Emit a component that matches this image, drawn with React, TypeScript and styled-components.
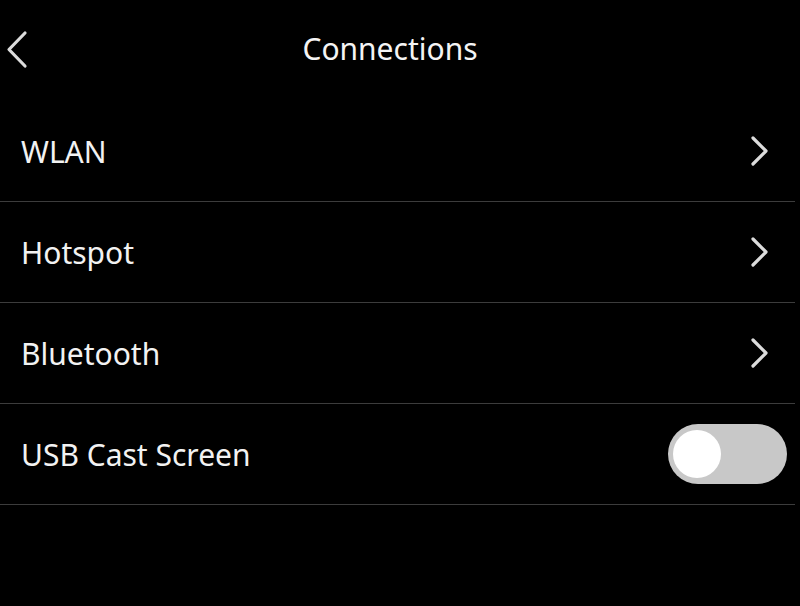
import React, { useState } from "react";
import styled, { createGlobalStyle } from "styled-components";

const GlobalStyle = createGlobalStyle`
  html, body {
    margin: 0;
    padding: 0;
    background: #000;
  }
  body {
    font-family: "Noto Sans", "Open Sans", sans-serif;
    color: #f2f2f2;
  }
`;

type Item = {
  label: string;
  kind: "link" | "toggle";
};

const items: Item[] = [
  { label: "WLAN", kind: "link" },
  { label: "Hotspot", kind: "link" },
  { label: "Bluetooth", kind: "link" },
  { label: "USB Cast Screen", kind: "toggle" },
];

function ChevronLeft() {
  return (
    <svg width="24" height="40" viewBox="0 0 24 40" fill="none">
      <path d="M20 4 L4 20.5 L20 37" stroke="#dcdcdc" strokeWidth="3.2" strokeLinecap="round" strokeLinejoin="round" />
    </svg>
  );
}

function ChevronRight() {
  return (
    <svg width="20" height="32" viewBox="0 0 20 32" fill="none">
      <path d="M3 3 L16 16 L3 29" stroke="#dcdcdc" strokeWidth="3.2" strokeLinecap="round" strokeLinejoin="round" />
    </svg>
  );
}

function Toggle({ on, onClick }: { on: boolean; onClick: () => void }) {
  return (
    <Track $on={on} onClick={onClick} role="switch" aria-checked={on}>
      <Knob $on={on} />
    </Track>
  );
}

export default function App(): JSX.Element {
  const [cast, setCast] = useState(false);

  return (
    <>
      <GlobalStyle />
      <Screen>
        <Header>
          <BackButton aria-label="Back">
            <ChevronLeft />
          </BackButton>
          <Title>Connections</Title>
        </Header>
        <List>
          {items.map((item) => (
            <Row key={item.label}>
              <Label>{item.label}</Label>
              {item.kind === "link" ? (
                <Arrow>
                  <ChevronRight />
                </Arrow>
              ) : (
                <Toggle on={cast} onClick={() => setCast(!cast)} />
              )}
            </Row>
          ))}
        </List>
      </Screen>
    </>
  );
}

const Screen = styled.div`
  width: 800px;
  height: 606px;
  background: #000;
  display: flex;
  flex-direction: column;
`;

const Header = styled.header`
  height: 101px;
  display: grid;
  grid-template-columns: 60px 1fr 80px;
  align-items: center;
  padding-bottom: 4px;
  box-sizing: border-box;
`;

const BackButton = styled.button`
  background: none;
  border: none;
  padding: 0 0 0 5px;
  display: flex;
  align-items: center;
  cursor: pointer;
`;

const Title = styled.h1`
  margin: 0;
  text-align: center;
  font-size: 30px;
  font-weight: 400;
  color: #f4f4f4;
`;

const List = styled.ul`
  list-style: none;
  margin: 0;
  padding: 0;
`;

const Row = styled.li`
  height: 101px;
  box-sizing: border-box;
  display: flex;
  align-items: center;
  justify-content: space-between;
  padding: 0 13px 0 21px;
  margin-right: 5px;
  border-bottom: 1px solid #3c3c3c;
`;

const Label = styled.span`
  font-size: 30px;
  color: #f2f2f2;
`;

const Arrow = styled.span`
  display: flex;
  margin-right: 12px;
`;

const Track = styled.div<{ $on: boolean }>`
  width: 119px;
  height: 60px;
  border-radius: 30px;
  background: ${(p) => (p.$on ? "#3b82f6" : "#c8c8c8")};
  display: flex;
  align-items: center;
  justify-content: ${(p) => (p.$on ? "flex-end" : "flex-start")};
  padding: 0 5px;
  box-sizing: border-box;
  margin-right: -5px;
  cursor: pointer;
`;

const Knob = styled.span<{ $on: boolean }>`
  width: 48px;
  height: 48px;
  border-radius: 50%;
  background: #fff;
`;
